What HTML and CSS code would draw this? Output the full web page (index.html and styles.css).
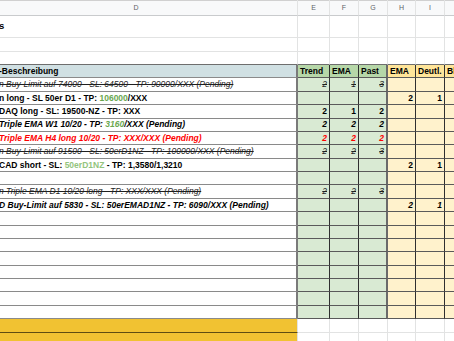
FILE: index.html
```html
<!DOCTYPE html>
<html lang="de">
<head>
<meta charset="utf-8">
<title>Trades</title>
<link rel="stylesheet" href="styles.css">
</head>
<body>
<div class="sheet">
  <div class="row colhdr">
    <div class="c">D</div><div class="c">E</div><div class="c">F</div><div class="c">G</div><div class="c">H</div><div class="c">I</div><div class="c">J</div>
  </div>
  <div class="row grid r22">
    <div class="c d title">s</div><div class="c"></div><div class="c"></div><div class="c"></div><div class="c"></div><div class="c"></div><div class="c"></div>
  </div>
  <div class="row grid r14">
    <div class="c d"></div><div class="c"></div><div class="c"></div><div class="c"></div><div class="c"></div><div class="c"></div><div class="c"></div>
  </div>
  <div class="row grid r13 top">
    <div class="c d"></div><div class="c"></div><div class="c"></div><div class="c"></div><div class="c"></div><div class="c"></div><div class="c"></div>
  </div>

  <div class="row tbl thead">
    <div class="c d hd"><span>-Beschreibung</span></div><div class="c g hg">Trend</div><div class="c g hg">EMA</div><div class="c g hg sep">Past</div><div class="c y hy">EMA</div><div class="c y hy">Deutl.</div><div class="c y hy">Bl</div>
  </div>

  <div class="row tbl strike">
    <div class="c d"><span>n Buy-Limit auf 74000 - SL: 64500 - TP: 90000/XXX (Pending)</span></div><div class="c g n">2</div><div class="c g n">1</div><div class="c g n sep">3</div><div class="c y n"></div><div class="c y n"></div><div class="c y n"></div>
  </div>
  <div class="row tbl bold">
    <div class="c d"><span>n long - SL 50er D1 - TP: <span class="gr">106000</span>/XXX</span></div><div class="c g n"></div><div class="c g n"></div><div class="c g n sep"></div><div class="c y n">2</div><div class="c y n">1</div><div class="c y n"></div>
  </div>
  <div class="row tbl bold">
    <div class="c d"><span>DAQ long - SL: 19500-NZ - TP: XXX</span></div><div class="c g n">2</div><div class="c g n">1</div><div class="c g n sep">2</div><div class="c y n"></div><div class="c y n"></div><div class="c y n"></div>
  </div>
  <div class="row tbl bi">
    <div class="c d"><span>Triple EMA W1 10/20 - TP: <span class="gr">3160</span>/XXX (Pending)</span></div><div class="c g n">2</div><div class="c g n">2</div><div class="c g n sep">2</div><div class="c y n"></div><div class="c y n"></div><div class="c y n"></div>
  </div>
  <div class="row tbl bi red">
    <div class="c d"><span>Triple EMA H4 long 10/20 - TP: XXX/XXX (Pending)</span></div><div class="c g n">2</div><div class="c g n">2</div><div class="c g n sep">2</div><div class="c y n"></div><div class="c y n"></div><div class="c y n"></div>
  </div>
  <div class="row tbl strike">
    <div class="c d"><span>n Buy-Limit auf 91500 - SL: 50erD1NZ - TP: 100000/XXX (Pending)</span></div><div class="c g n">2</div><div class="c g n">2</div><div class="c g n sep">3</div><div class="c y n"></div><div class="c y n"></div><div class="c y n"></div>
  </div>
  <div class="row tbl bold">
    <div class="c d"><span>CAD short - SL: <span class="lg">50erD1NZ</span> - TP: 1,3580/1,3210</span></div><div class="c g n"></div><div class="c g n"></div><div class="c g n sep"></div><div class="c y n">2</div><div class="c y n">1</div><div class="c y n"></div>
  </div>
  <div class="row tbl">
    <div class="c d"></div><div class="c g"></div><div class="c g"></div><div class="c g sep"></div><div class="c y"></div><div class="c y"></div><div class="c y"></div>
  </div>
  <div class="row tbl strike">
    <div class="c d"><span>n Triple EMA D1 10/20 long - TP: XXX/XXX (Pending)</span></div><div class="c g n">2</div><div class="c g n">2</div><div class="c g n sep">3</div><div class="c y n"></div><div class="c y n"></div><div class="c y n"></div>
  </div>
  <div class="row tbl bi">
    <div class="c d"><span>D Buy-Limit auf 5830 - SL: 50erEMAD1NZ - TP: 6090/XXX (Pending)</span></div><div class="c g n"></div><div class="c g n"></div><div class="c g n sep"></div><div class="c y n">2</div><div class="c y n">1</div><div class="c y n"></div>
  </div>

  <div class="row tbl"><div class="c d"></div><div class="c g"></div><div class="c g"></div><div class="c g sep"></div><div class="c y"></div><div class="c y"></div><div class="c y"></div></div>
  <div class="row tbl"><div class="c d"></div><div class="c g"></div><div class="c g"></div><div class="c g sep"></div><div class="c y"></div><div class="c y"></div><div class="c y"></div></div>
  <div class="row tbl"><div class="c d"></div><div class="c g"></div><div class="c g"></div><div class="c g sep"></div><div class="c y"></div><div class="c y"></div><div class="c y"></div></div>
  <div class="row tbl"><div class="c d"></div><div class="c g"></div><div class="c g"></div><div class="c g sep"></div><div class="c y"></div><div class="c y"></div><div class="c y"></div></div>
  <div class="row tbl"><div class="c d"></div><div class="c g"></div><div class="c g"></div><div class="c g sep"></div><div class="c y"></div><div class="c y"></div><div class="c y"></div></div>
  <div class="row tbl"><div class="c d"></div><div class="c g"></div><div class="c g"></div><div class="c g sep"></div><div class="c y"></div><div class="c y"></div><div class="c y"></div></div>
  <div class="row tbl"><div class="c d"></div><div class="c g"></div><div class="c g"></div><div class="c g sep"></div><div class="c y"></div><div class="c y"></div><div class="c y"></div></div>
  <div class="row tbl"><div class="c d"></div><div class="c g"></div><div class="c g"></div><div class="c g sep"></div><div class="c y"></div><div class="c y"></div><div class="c y"></div></div>

  <div class="row foot"><div class="c d gold"></div><div class="c"></div><div class="c"></div><div class="c"></div><div class="c"></div><div class="c"></div><div class="c"></div></div>
  <div class="row foot"><div class="c d gold"></div><div class="c"></div><div class="c"></div><div class="c"></div><div class="c"></div><div class="c"></div><div class="c"></div></div>
</div>
</body>
</html>
```

FILE: styles.css
```css
* { box-sizing: border-box; margin: 0; padding: 0; }
html, body { width: 454px; height: 341px; overflow: hidden; background: #fff; }
body { font-family: "Liberation Sans", Arial, sans-serif; color: #000; }

.sheet { margin-left: -25px; width: 520px; }

.row {
  display: grid;
  grid-template-columns: 323px 32px 29px 29px 28px 29px 29px;
}

.c {
  display: flex;
  align-items: center;
  overflow: hidden;
  white-space: nowrap;
  border-right: 1px solid #e2e3e3;
  border-bottom: 1px solid #e2e3e3;
  font-size: 8.5px;
  line-height: 1;
}

/* column letters */
.colhdr { height: 16px; background: #f8f9fa; box-shadow: inset 0 1px 0 #d0d0d0; }
.colhdr .c {
  justify-content: center;
  color: #5f6368;
  font-size: 7px;
  border-bottom-color: #c9cbcd;
}

.r22 { height: 22px; }
.r14 { height: 14px; }
.r13 { height: 13px; }
.top .c { border-bottom: 1px solid #6e6e6e; }

.d { padding-left: 24px; }
.title { font-weight: bold; font-size: 9.5px; align-items: flex-start; padding-top: 5px; }

/* table */
.tbl { height: 13.375px; }
.tbl .c { border-bottom: 1px solid #5a5a5a; border-right: 1px solid #2f2f2f; }
.tbl .d { border-bottom-color: #8a8a8a; border-right: 2px solid #7a7a7a; }
.tbl .sep { border-right: 2px solid #6a6a6a; }

.g { background: #d9ead3; }
.y { background: #fff2cc; }
.hd { background: #d0e0e3; font-weight: bold; }
.hg { background: #b6d7a8; font-weight: bold; padding-left: 2px; }
.hy { background: #ffe599; font-weight: bold; padding-left: 2px; }

.n { justify-content: flex-end; padding-right: 2px; }

.bold .c { font-weight: bold; }
.bi .c { font-weight: bold; font-style: italic; }
.strike .c { font-style: italic; text-decoration: line-through; color: #1f1f1f; }
.red .c { color: #ff0000; }
.gr { color: #6aa84f; }
.lg { color: #93c47d; }

/* footer */
.foot { height: 13.375px; }
.foot .gold { background: #f1c232; border-bottom: 1px solid #5e4d12; border-right: 1px solid #e2e3e3; }
```
